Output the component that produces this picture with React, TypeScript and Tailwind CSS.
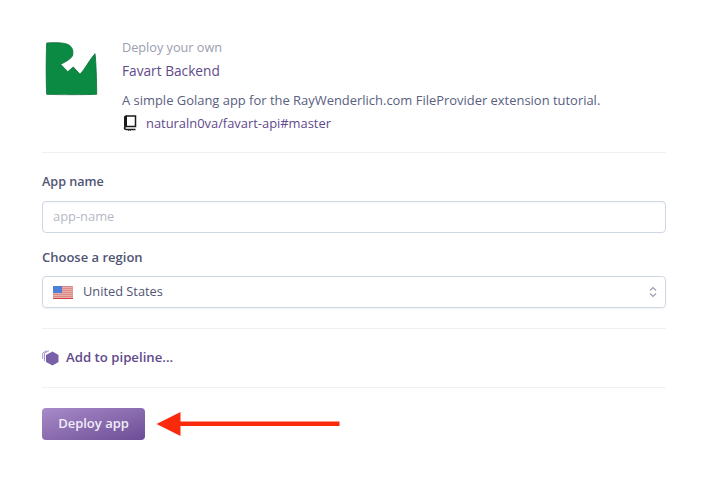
export default function App() {
  return (
    <div className="relative w-[704px] h-[482px] bg-white pl-[42px] pr-[38px] pt-[39px] text-[13px] text-[#596080]" style={{ fontFamily: '"Open Sans", sans-serif' }}>
      <div className="flex h-[114px] border-b border-[#eef0f3]">
        <div className="w-[80px] pl-[3px] pt-[2px]">
          <svg width="53" height="56" viewBox="0 0 53 56">
            <path d="M1.700 2 C10 1.500 19 1.500 23 3.500 C27 5.500 28.500 9 27.700 14 C26.500 18 20 21 15.700 23.300 L22.700 30.700 L28.300 26 L35 33.300 C40 28 45 18 50 12.700 C51 20 51.700 40 51.700 53.300 C42 53.800 12 53.800 1.700 53.300 C1 40 1 15 1.700 2 Z" fill="#0b8a43" stroke="#0a6b36" strokeWidth="0.8" />
          </svg>
        </div>
        <div className="flex flex-col">
          <div className="text-[12.700px] leading-[16px] text-[#9a9eb0]">Deploy your own</div>
          <div className="mt-[8px] text-[13.700px] leading-[16px] text-[#5f4a8c]">Favart Backend</div>
          <div className="mt-[13px] text-[12.950px] leading-[16px] text-[#596080]">A simple Golang app for the RayWenderlich.com FileProvider extension tutorial.</div>
          <div className="mt-[7px] flex items-center leading-[16px]">
            <svg width="14" height="16" viewBox="0 0 14 16" className="ml-[1px] mr-[9px]">
              <path d="M3 1 H12.500 V11.500 H3.500 C2 11.500 1.500 12.200 1.500 13 C1.500 13.800 2 14.500 3.500 14.500 H12.500" fill="none" stroke="#1a1a1a" strokeWidth="1.500" />
              <path d="M1 13 V2 C1 1.200 1.800 0.500 3 0.500 H4 V11 H3 C2 11 1 11.500 1 13 Z" fill="#1a1a1a" />
              <path d="M5 14 V16 L6.500 15 L8 16 V14 Z" fill="#1a1a1a" />
            </svg>
            <span className="text-[12.900px] text-[#5f4a8c]">naturaln0va/favart-api#master</span>
          </div>
        </div>
      </div>
      <div className="mt-[21px] text-[12.600px] font-semibold leading-[16px] text-[#4f5573]">App name</div>
      <div className="mt-[11px] flex h-[32px] items-center rounded-[4px] border border-[#cfd7e6] px-[10px] text-[12.900px] text-[#b5b9c6] shadow-[inset_0_1px_2px_rgba(0,0,0,0.04)]">app-name</div>
      <div className="mt-[16px] text-[13px] font-semibold leading-[16px] text-[#4f5573]">Choose a region</div>
      <div className="mt-[11px] flex h-[32px] items-center rounded-[4px] border border-[#cfd7e6] pl-[10px] pr-[7px] text-[12.800px] text-[#4f5573] shadow-[0_1px_2px_rgba(0,0,0,0.06)]">
        <svg width="20" height="13" viewBox="0 0 20 13" className="mr-[10px]">
          <rect width="20" height="13" fill="#f3f3f3" />
          <path d="M0 0.900 H20 M0 2.900 H20 M0 4.900 H20 M0 6.900 H20 M0 8.900 H20 M0 10.900 H20 M0 12.500 H20" stroke="#d0453f" strokeWidth="1" />
          <rect width="9" height="7" fill="#4f7fd6" />
        </svg>
        <span className="flex-1">United States</span>
        <svg width="10" height="14" viewBox="0 0 10 14">
          <path d="M2 5.500 L5 2.500 L8 5.500 M2 8.500 L5 11.500 L8 8.500" fill="none" stroke="#9a9eb0" strokeWidth="1.200" />
        </svg>
      </div>
      <div className="mt-[20px] flex h-[60px] items-center border-y border-[#eef0f3]">
        <svg width="18" height="16" viewBox="0 0 18 16" className="mr-[6px]">
          <path d="M5 0.500 L0.700 3 V9" fill="none" stroke="#a795c9" strokeWidth="1" />
          <path d="M7 0.700 L2.500 3.200 V11" fill="none" stroke="#a795c9" strokeWidth="1" />
          <path d="M10.500 1.500 L16.500 5 V12 L10.500 15.500 L4 12 V5 Z" fill="#7a60a8" />
        </svg>
        <span className="text-[13.200px] font-semibold text-[#5f4a8c]">Add to pipeline...</span>
      </div>
      <button className="mt-[20px] flex h-[32px] w-[103px] items-center justify-center rounded-[4px] bg-linear-to-br from-[#a88bc9] to-[#6d4d96] text-[13px] font-semibold text-[#f2ecf8]">Deploy app</button>
      <svg width="184" height="30" viewBox="0 0 184 30" className="absolute left-[156px] top-[409px]">
        <path d="M0.500 15 L24.500 3 V12.500 H183.500 V17 H24.500 V27 Z" fill="#fb2a0c" />
      </svg>
    </div>
  );
}
